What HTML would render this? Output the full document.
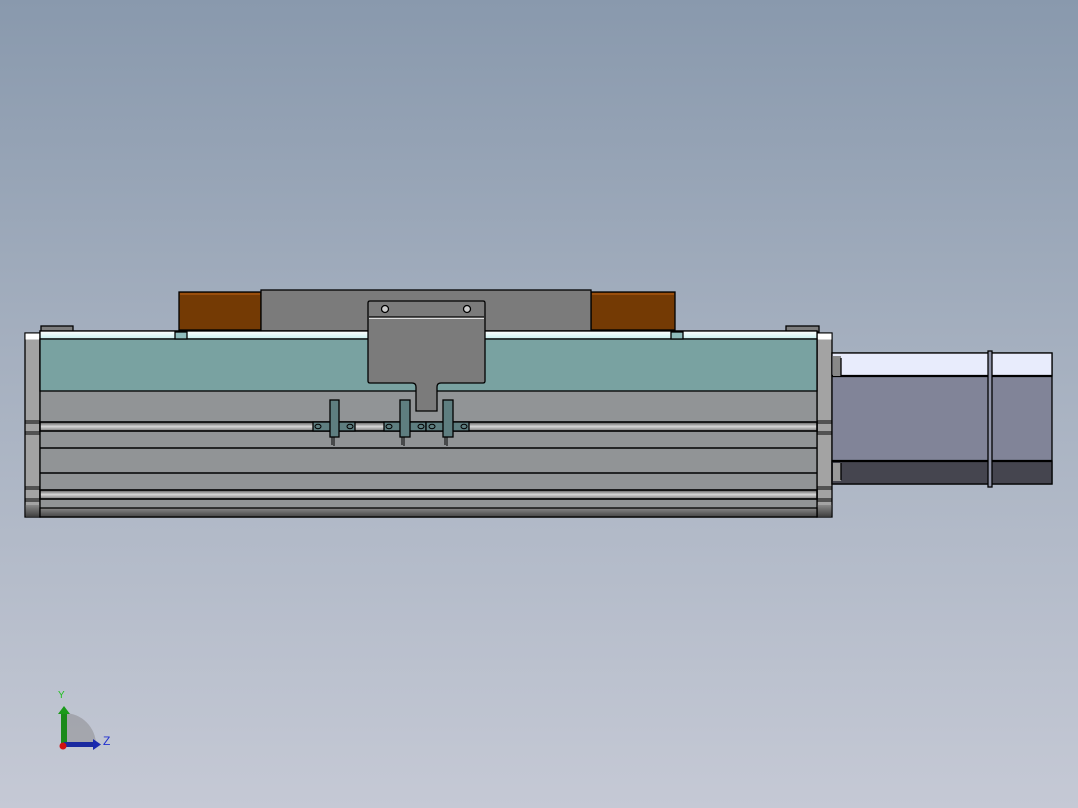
<!DOCTYPE html>
<html><head><style>
html,body{margin:0;padding:0;width:1078px;height:808px;overflow:hidden}
body{background:linear-gradient(#8999ad 0%,#a3aebe 40%,#c5c9d5 100%)}
svg{position:absolute;left:0;top:0}
</style></head><body>
<svg width="1078" height="808" viewBox="0 0 1078 808">
<defs>
<linearGradient id="groove" x1="0" y1="0" x2="0" y2="1"><stop offset="0" stop-color="#555"/><stop offset=".5" stop-color="#d8d8d8"/><stop offset="1" stop-color="#777"/></linearGradient>
<linearGradient id="bot" x1="0" y1="0" x2="0" y2="1"><stop offset="0" stop-color="#888"/><stop offset="1" stop-color="#444"/></linearGradient>
<linearGradient id="rail" x1="0" y1="0" x2="0" y2="1"><stop offset="0" stop-color="#fff"/><stop offset="1" stop-color="#c8eeee"/></linearGradient>
</defs>
<g stroke="#000" stroke-width="1.3">
<rect x="179" y="292" width="82" height="38" fill="#743a04"/>
<line x1="180" y1="294" x2="260" y2="294" stroke="#b05a10"/>
<rect x="591" y="292" width="84" height="38" fill="#743a04"/>
<line x1="592" y1="294" x2="674" y2="294" stroke="#b05a10"/>
<rect x="261" y="290" width="330" height="41" fill="#7b7b7b"/>
<rect x="41" y="326" width="32" height="6" fill="#7d7d7d"/>
<rect x="786" y="326" width="33" height="6" fill="#7d7d7d"/>
<rect x="25" y="333" width="15" height="184" fill="#a3a3a3"/>
<rect x="817" y="333" width="15" height="184" fill="#a3a3a3"/>
<rect x="25.5" y="333.5" width="14" height="6" fill="#fff" stroke="none"/>
<rect x="817.5" y="333.5" width="14" height="6" fill="#fff" stroke="none"/>
<rect x="25.5" y="505" width="14" height="11" fill="url(#bot)" stroke="none"/>
<rect x="817.5" y="505" width="14" height="11" fill="url(#bot)" stroke="none"/>
<path d="M25 421 H40 M25 423 H40 M25 432 H40 M25 434 H40 M25 487 H40 M25 489 H40 M25 499 H40 M25 501 H40 M817 421 H832 M817 423 H832 M817 432 H832 M817 434 H832 M817 487 H832 M817 489 H832 M817 499 H832 M817 501 H832" stroke-width="1"/>
<rect x="40" y="331" width="777" height="186" fill="#919496"/>
<rect x="40" y="331" width="777" height="8" fill="url(#rail)"/>
<rect x="40" y="339" width="777" height="52" fill="#79a2a1"/>
<rect x="40" y="422" width="777" height="9" fill="url(#groove)" stroke-width="1.6"/>
<line x1="40" y1="448" x2="817" y2="448" stroke-width="1.6"/>
<line x1="40" y1="473" x2="817" y2="473" stroke-width="1.6"/>
<rect x="40" y="490" width="777" height="9" fill="url(#groove)" stroke-width="1.6"/>
<rect x="40" y="508" width="777" height="9" fill="url(#bot)"/>
<rect x="175" y="332" width="12" height="7" fill="#8fbcbc"/>
<rect x="671" y="332" width="12" height="7" fill="#8fbcbc"/>
<path d="M370 301 H483 Q485 301 485 303 V381 Q485 383 483 383 H441 Q437 383 437 387 V411 H416 V387 Q416 383 412 383 H370 Q368 383 368 381 V303 Q368 301 370 301 Z" fill="#7b7b7b"/>
<line x1="369" y1="318" x2="484" y2="318" stroke="#ddd" stroke-width="2"/>
<line x1="369" y1="317" x2="484" y2="317"/>
<circle cx="385" cy="309" r="3.5" fill="#ccc"/>
<circle cx="467" cy="309" r="3.5" fill="#ccc"/>
<g fill="#5e7e80">
<rect x="313" y="422" width="42" height="9"/>
<rect x="384" y="422" width="42" height="9"/>
<rect x="426" y="422" width="43" height="9"/>
<rect x="330" y="400" width="9" height="37"/>
<rect x="400" y="400" width="10" height="37"/>
<rect x="443" y="400" width="10" height="37"/>
</g>
<g fill="none" stroke-width="1">
<ellipse cx="318" cy="426.5" rx="3" ry="2.2"/><ellipse cx="350" cy="426.5" rx="3" ry="2.2"/>
<ellipse cx="389" cy="426.5" rx="3" ry="2.2"/><ellipse cx="421" cy="426.5" rx="3" ry="2.2"/>
<ellipse cx="432" cy="426.5" rx="3" ry="2.2"/><ellipse cx="464" cy="426.5" rx="3" ry="2.2"/>
<path d="M332 437 V445 M334 437 V446 M402 437 V445 M404 437 V446 M445 437 V445 M447 437 V446"/>
</g>
<rect x="832" y="353" width="220" height="131" fill="#818498"/>
<rect x="832" y="353" width="220" height="23" fill="#e8ecfc"/>
<rect x="832" y="461" width="220" height="23" fill="#45454f"/>
<line x1="832" y1="376" x2="1052" y2="376" stroke-width="2.2"/>
<line x1="832" y1="461" x2="1052" y2="461" stroke-width="2.2"/>
<rect x="833" y="356" width="8" height="20" fill="#888" stroke="none"/>
<rect x="833" y="463" width="8" height="18" fill="#999" stroke="none"/>
<line x1="841" y1="358" x2="841" y2="376"/>
<line x1="841" y1="463" x2="841" y2="480"/>
<rect x="988" y="351" width="4" height="136" fill="#9094a8"/>
</g>
<path d="M64 745 V713 A32 32 0 0 1 96 745 Z" fill="#9c9ea4" opacity=".8"/>
<rect x="61" y="712" width="6" height="33" fill="#1a8a1a"/>
<path d="M58 714 L64 706 L70 714 Z" fill="#1a9a1a"/>
<rect x="64" y="742" width="30" height="5" fill="#1a2aa0"/>
<path d="M93 739 L101 744.5 L93 750 Z" fill="#1a2ab0"/>
<circle cx="63" cy="746" r="3.5" fill="#d01010"/>
<text x="58" y="698" font-family="Liberation Sans, sans-serif" font-size="10" fill="#20c020">Y</text>
<text x="103" y="745" font-family="Liberation Sans, sans-serif" font-size="12" fill="#2030d0">Z</text>
</svg>
</body></html>
